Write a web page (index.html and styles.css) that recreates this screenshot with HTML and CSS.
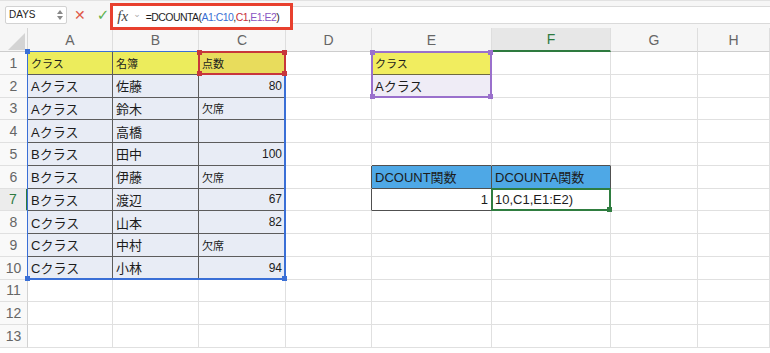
FILE: index.html
```html
<!DOCTYPE html>
<html lang="ja">
  <head>
    <meta charset="UTF-8" />
    <title>DCOUNTA</title>
    <link rel="stylesheet" href="styles.css">
  </head>
  <body>
    <!-- formula bar -->
    <div class="toolbar">
      <div class="namebox">
        <span>DAYS</span>
        <span class="spin"><i class="up"></i><i class="down"></i></span>
      </div>
      <span class="cancel">&#x2715;</span>
      <span class="ok">&#x2713;</span>
      <div class="formula">
        <span class="fx">fx</span>
        <span class="chev">&#x2304;</span>
        <span class="ftext">=DCOUNTA(<b class="f-blue">A1:C10</b>,<b class="f-red">C1</b>,<b class="f-purple">E1:E2</b>)</span>
      </div>
      <div class="formula-rest"></div>
    </div>

    <!-- sheet -->
    <div class="sheet">
      <div class="c corner"><svg width="28" height="24"><polygon points="25,5 25,22 8,22" fill="#d4d4d4" /></svg></div>
      <div class="c hd">A</div><div class="c hd">B</div><div class="c hd">C</div><div class="c hd">D</div>
      <div class="c hd">E</div><div class="c hd hd-active">F</div><div class="c hd">G</div><div class="c hd">H</div>

      <div class="c rn">1</div>
      <div class="c t y sm">クラス</div><div class="c t y sm">名簿</div><div class="c t y2 sm">点数</div>
      <div class="c"></div><div class="c y3 sm dk">クラス</div><div class="c"></div><div class="c"></div><div class="c"></div>

      <div class="c rn">2</div>
      <div class="c t">Aクラス</div><div class="c t">佐藤</div><div class="c t num">80</div>
      <div class="c"></div><div class="c lav">Aクラス</div><div class="c"></div><div class="c"></div><div class="c"></div>

      <div class="c rn">3</div>
      <div class="c t">Aクラス</div><div class="c t">鈴木</div><div class="c t sm">欠席</div>
      <div class="c"></div><div class="c"></div><div class="c"></div><div class="c"></div><div class="c"></div>

      <div class="c rn">4</div>
      <div class="c t">Aクラス</div><div class="c t">高橋</div><div class="c t"></div>
      <div class="c"></div><div class="c"></div><div class="c"></div><div class="c"></div><div class="c"></div>

      <div class="c rn">5</div>
      <div class="c t">Bクラス</div><div class="c t">田中</div><div class="c t num">100</div>
      <div class="c"></div><div class="c bb"></div><div class="c bb"></div><div class="c"></div><div class="c"></div>

      <div class="c rn">6</div>
      <div class="c t">Bクラス</div><div class="c t">伊藤</div><div class="c t sm">欠席</div>
      <div class="c br"></div><div class="c bx blue">DCOUNT関数</div><div class="c bx blue">DCOUNTA関数</div><div class="c"></div><div class="c"></div>

      <div class="c rn rn-active">7</div>
      <div class="c t">Bクラス</div><div class="c t">渡辺</div><div class="c t num">67</div>
      <div class="c br"></div><div class="c bx num big">1</div><div class="c bx">10,C1,E1:E2)</div><div class="c"></div><div class="c"></div>

      <div class="c rn">8</div>
      <div class="c t">Cクラス</div><div class="c t">山本</div><div class="c t num">82</div>
      <div class="c"></div><div class="c"></div><div class="c"></div><div class="c"></div><div class="c"></div>

      <div class="c rn">9</div>
      <div class="c t">Cクラス</div><div class="c t">中村</div><div class="c t sm">欠席</div>
      <div class="c"></div><div class="c"></div><div class="c"></div><div class="c"></div><div class="c"></div>

      <div class="c rn">10</div>
      <div class="c t">Cクラス</div><div class="c t">小林</div><div class="c t num">94</div>
      <div class="c"></div><div class="c"></div><div class="c"></div><div class="c"></div><div class="c"></div>

      <div class="c rn">11</div>
      <div class="c"></div><div class="c"></div><div class="c"></div><div class="c"></div>
      <div class="c"></div><div class="c"></div><div class="c"></div><div class="c"></div>

      <div class="c rn">12</div>
      <div class="c"></div><div class="c"></div><div class="c"></div><div class="c"></div>
      <div class="c"></div><div class="c"></div><div class="c"></div><div class="c"></div>

      <div class="c rn">13</div>
      <div class="c"></div><div class="c"></div><div class="c"></div><div class="c"></div>
      <div class="c"></div><div class="c"></div><div class="c"></div><div class="c"></div>

      <!-- range highlights drawn over the cells -->
      <div class="sel sel-blue"><i class="h tl"></i><i class="h bl"></i><i class="h br"></i></div>
      <div class="sel sel-red"><i class="h tl"></i><i class="h tr"></i><i class="h bl"></i><i class="h br"></i></div>
      <div class="sel sel-purple"><i class="h tl"></i><i class="h tr"></i><i class="h bl"></i><i class="h br"></i></div>
      <div class="sel sel-green"><i class="h br"></i></div>
    </div>
  </body>
</html>
```

FILE: styles.css
```css
* {
  box-sizing: border-box;
}

body {
  margin: 0;
  font-family: "Liberation Sans", "Noto Sans CJK JP", sans-serif;
  background-color: #ffffff;
  overflow: hidden;
}

/* Formula bar */
.toolbar {
  height: 28px;
  display: flex;
  align-items: center;
  background-color: #f6f6f6;
  border-top: 1px solid #e2e2e2;
  position: relative;
  z-index: 2;
}

.namebox {
  margin-left: 5px;
  width: 62px;
  height: 18px;
  background-color: #fff;
  border: 1px solid #d2d2d2;
  border-radius: 2px;
  display: flex;
  align-items: center;
  justify-content: space-between;
  padding: 0 3px;
  font-size: 10px;
  color: #222;
}

.spin {
  display: flex;
  flex-direction: column;
  gap: 2px;
}

.spin i {
  display: block;
  width: 0;
  height: 0;
  border-left: 3px solid transparent;
  border-right: 3px solid transparent;
}

.spin .up {
  border-bottom: 4px solid #888;
}

.spin .down {
  border-top: 4px solid #888;
}

.cancel {
  margin-left: 7px;
  color: #e0594a;
  font-size: 14px;
  font-family: "DejaVu Sans", sans-serif;
}

.ok {
  margin-left: 11px;
  color: #5fb14f;
  font-size: 15px;
  font-weight: bold;
  font-family: "DejaVu Sans", sans-serif;
}

.formula {
  align-self: flex-start;
  margin-top: 2px;
  margin-left: 1px;
  width: 183px;
  height: 27px;
  border: 3px solid #e8402e;
  background-color: #fff;
  display: flex;
  align-items: center;
  padding-left: 4px;
}

.fx {
  font-family: "Liberation Serif", serif;
  font-style: italic;
  font-size: 15px;
  color: #444;
}

.chev {
  margin-left: 5px;
  margin-top: -6px;
  font-size: 9px;
  color: #aaa;
  font-family: "DejaVu Sans", sans-serif;
}

.ftext {
  margin-left: 5px;
  font-size: 10.5px;
  letter-spacing: -0.55px;
  color: #1e1e1e;
}

.ftext b {
  font-weight: normal;
}

.f-blue {
  color: #3a6fd4;
}

.f-red {
  color: #c8313a;
}

.f-purple {
  color: #8a56c2;
}

.formula-rest {
  flex: 1;
  height: 18px;
  background-color: #fff;
  border-top: 1px solid #dadada;
  border-bottom: 1px solid #dadada;
}

/* Sheet grid */
.sheet {
  display: grid;
  grid-template-columns: 28px 85px 86px 87px 86px 120px 119px 87px 1fr;
  grid-template-rows: 24px;
  grid-auto-rows: 22.75px;
  position: relative;
}

.c {
  border-right: 1px solid #e0e0e0;
  border-bottom: 1px solid #e0e0e0;
  display: flex;
  align-items: center;
  padding: 0 3px;
  font-size: 13px;
  color: #1c1c1c;
  white-space: nowrap;
  overflow: hidden;
}

.corner {
  padding: 0;
  background-color: #f6f6f6;
  border-bottom-color: #cdcdcd;
  border-right-color: #d6d6d6;
}

.hd {
  justify-content: center;
  background-color: #f6f6f6;
  color: #666;
  font-size: 14px;
  border-bottom-color: #cdcdcd;
  border-right-color: #dedede;
}

.hd-active {
  background-color: #e7e7e7;
  color: #2e7a3f;
  border-bottom: 2px solid #2e7a3f;
}

.rn {
  justify-content: center;
  background-color: #f9f9f9;
  color: #666;
  font-size: 14px;
  border-right-color: #d2d2d2;
}

.rn-active {
  background-color: #ececec;
  color: #2e7a3f;
  border-right: 2px solid #2e7a3f;
}

/* Data table */
.t {
  background-color: #e8ecf5;
  border-color: #5c5c5c;
}

.y {
  background-color: #ecec5c;
}

.y2 {
  background-color: #e8dc5c;
}

.y3 {
  background-color: #f1ed5f;
}

.dk {
  border-bottom-color: #6e6a40;
}

.lav {
  background-color: #efecf6;
}

.sm {
  font-size: 11px;
}

.num {
  justify-content: flex-end;
  font-size: 12px;
}

.big {
  font-size: 13px;
}

.blue {
  background-color: #4ea8e6;
}

.bx {
  border-color: #505050;
}

.bb {
  border-bottom-color: #505050;
}

.br {
  border-right-color: #505050;
}

/* Selection overlays */
.sel {
  position: absolute;
  pointer-events: none;
  top: -1px;
  left: -1px;
  right: 0;
  bottom: 0;
}

.sel-blue {
  grid-row: 2 / 12;
  grid-column: 2 / 5;
  border: 1px solid #3a6fd6;
  border-right-width: 2px;
  border-bottom-width: 2px;
}

.sel-red {
  grid-row: 2 / 3;
  grid-column: 4 / 5;
  border: 2px solid #c8363b;
}

.sel-purple {
  grid-row: 2 / 4;
  grid-column: 6 / 7;
  border: 2px solid #9a70cc;
}

.sel-green {
  grid-row: 8 / 9;
  grid-column: 7 / 8;
  border: 2px solid #2f7d40;
}

.h {
  position: absolute;
  width: 5px;
  height: 5px;
}

.sel-blue .h {
  background-color: #3a6fd6;
}

.sel-red .h {
  background-color: #c8363b;
}

.sel-purple .h {
  background-color: #9a70cc;
}

.sel-green .h {
  background-color: #2f7d40;
}

.tl {
  top: -3px;
  left: -3px;
}

.tr {
  top: -3px;
  right: -3px;
}

.bl {
  bottom: -3px;
  left: -3px;
}

.br.h,
.h.br {
  bottom: -3px;
  right: -3px;
}
```
